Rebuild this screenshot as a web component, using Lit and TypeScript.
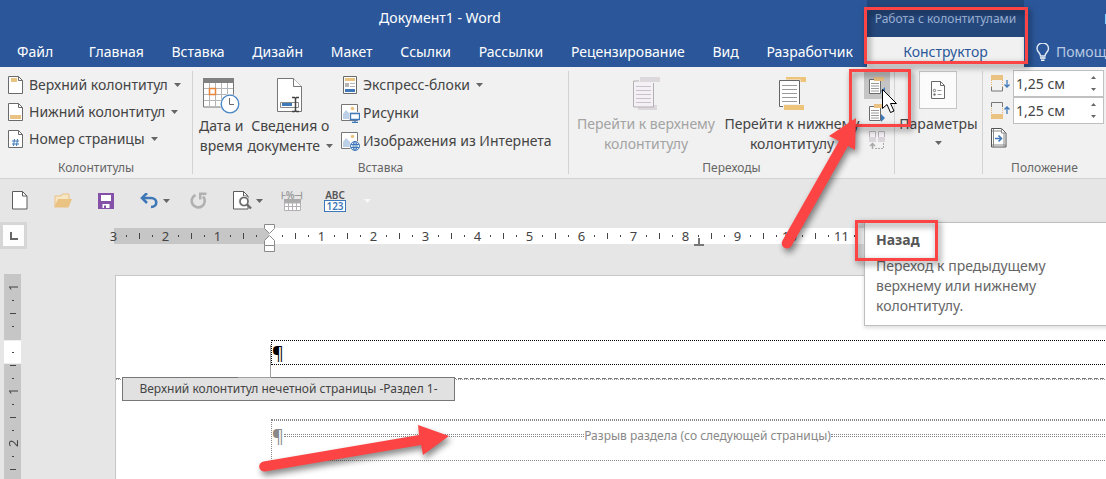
import { LitElement, html, svg, css } from "lit";
import { customElement } from "lit/decorators.js";
import { classMap } from "lit/directives/class-map.js";

const caret = html`<svg class="caret" viewBox="0 0 7 4" width="7" height="4"><path d="M0 0h7L3.500 4z" fill="currentColor"/></svg>`;

const icon = (w: number, h: number, body: unknown) =>
  html`<svg class="icon" width=${w} height=${h} viewBox="0 0 ${w} ${h}" aria-hidden="true">${body}</svg>`;

const icons = {
  header: icon(15, 18, svg`<path d="M.5 .5h10l4 4v13H.5z" fill="#fff" stroke="#6a6a6a"/><path d="M10.500 .5v4h4" fill="none" stroke="#6a6a6a"/><path d="M3 2h6v4H3z" fill="#eac282"/>`),
  footer: icon(15, 18, svg`<path d="M.5 .5h10l4 4v13H.5z" fill="#fff" stroke="#6a6a6a"/><path d="M10.500 .5v4h4" fill="none" stroke="#6a6a6a"/><path d="M2 12h11v4H2z" fill="#eac282"/>`),
  number: icon(15, 18, svg`<path d="M.5 .5h10l4 4v13H.5z" fill="#fff" stroke="#6a6a6a"/><path d="M10.500 .5v4h4" fill="none" stroke="#6a6a6a"/><path d="M6.500 9l-1 7M9.500 9l-1 7M4 11h7M4 14h7" stroke="#3f78b8" fill="none"/>`),
  date: icon(37, 36, svg`<path d="M.5 4h30v25H.5z" fill="#fff" stroke="#777"/><path d="M0 0h31v5H0z" fill="#808080"/><path d="M6.500 5v23M12.500 5v23M18.500 5v23M24.500 5v23M1 10.500h29M1 16.500h29M1 22.500h29" stroke="#b5b5b5"/><path d="M6.500 10.500h6v6h-6z" fill="#fff" stroke="#e8833a" stroke-width="1.500"/><circle cx="27" cy="26" r="10" fill="#f1f1f1"/><circle cx="27" cy="26" r="8.800" fill="#fff" stroke="#4a86c5" stroke-width="1.300"/><path d="M26.500 20v6.500H31" fill="none" stroke="#6a6a6a"/>`),
  info: icon(26, 36, svg`<path d="M.5 .5h16l8 8v25H.5z" fill="#fff" stroke="#777"/><path d="M16.500 .5v8h8" fill="#fff" stroke="#777"/><path d="M3.500 24.500h18v5h-18z" fill="#fff" stroke="#8b8b8b"/><path d="M5 25h10v3H5z" fill="#3f78b8"/><path d="M15 19.500h2.500l1 1 1-1H22M18.500 20v13M15 33.500h2.500l1-1 1 1H22" fill="none" stroke="#444" stroke-width="1.500"/>`),
  blocks: icon(19, 19, svg`<path d="M2.500 .5h13v17h-13z" fill="#fff" stroke="#6a6a6a"/><path d="M4 2h10v3H4z" fill="#eac282"/><path d="M4 7h4v4H4z" fill="#b5b5b5"/><path d="M9 7.500h5M9 10.500h5" stroke="#b5b5b5"/><path d="M4 13h10v3H4z" fill="#3f78b8"/>`),
  picture: icon(19, 19, svg`<path d="M.5 .5h16v16H.5z" fill="#fff" stroke="#777"/><circle cx="11.500" cy="4.500" r="1.800" fill="#eac282"/><path d="M2 15V10l3-4 4 4v5z" fill="#bcd0e8"/><path d="M8 8h11v8H8z" fill="#f1f1f1"/><path d="M9.500 9.500h9v6h-9z" fill="#fff" stroke="#3f78b8" stroke-width="1.300"/><path d="M14 15v3M11 18.300h6" stroke="#3f78b8" stroke-width="1.300"/>`),
  online: icon(19, 19, svg`<path d="M.5 .5h16v16H.5z" fill="#fff" stroke="#777"/><circle cx="11.500" cy="4.500" r="1.800" fill="#eac282"/><path d="M2 15V10l3-4 4 4v5z" fill="#bcd0e8"/><circle cx="14" cy="14" r="5.500" fill="#f1f1f1"/><g fill="none" stroke="#3f78b8"><circle cx="14" cy="14" r="4.500" fill="#fff"/><ellipse cx="14" cy="14" rx="2" ry="4.500"/><path d="M14 9.500v9M10 12.500h8M10 15.500h8"/></g>`),
  toHeader: icon(28, 34, svg`<path d="M6 28h19v5H6z" fill="#dcd8dc"/><path d="M1.500 4h20v26h-20z" fill="#f5f0f5" stroke="#b3afb3"/><path d="M7 0h21v6H7z" fill="#f1f1f1"/><path d="M8 0h20v5H8z" fill="#dcd8dc"/><path d="M4 9.500h15M4 13.500h15M4 17.500h15M4 21.500h15M4 25.500h15" stroke="#c8c3c8"/>`),
  toFooter: icon(28, 34, svg`<path d="M8 0h20v5H8z" fill="#eec47b"/><path d="M.5 2.500h22v29H.5z" fill="#f1f1f1"/><path d="M1.500 3.500h20v26h-20z" fill="#fff" stroke="#666"/><path d="M5 27h22v6H5z" fill="#f1f1f1"/><path d="M6 28h20v5H6z" fill="#eec47b"/><path d="M4 8.500h15M4 12.500h15M4 16.500h15M4 20.500h15M4 24.500h15" stroke="#9a9a9a"/>`),
  prev: icon(18, 18, svg`<path d="M1.500 2.500h11v14h-11z" fill="#fff" stroke="#6a6a6a"/><path d="M6 0h10v4H6z" fill="#eac282"/><path d="M3 6.500h8M3 9h8M3 11.500h8M3 14h8" stroke="#9a9a9a"/><path d="M17 10v8l-4-4z" fill="#3f78b8"/>`),
  next: icon(18, 18, svg`<path d="M1.500 2.500h11v14h-11z" fill="#fff" stroke="#6a6a6a"/><path d="M6 0h9v4H6z" fill="#eac282"/><path d="M3 6.500h8M3 9h8M3 11.500h8M3 14h8" stroke="#9a9a9a"/><path d="M13 10v8l4-4z" fill="#3f78b8"/>`),
  link: icon(18, 18, svg`<path d="M1.500 .5h6v6h-6zM10.500 .5h6v6h-6z" fill="#f5f0f5" stroke="#b9b5b9"/><path d="M1 6h7v5H1zM10 6h7v5h-7z" fill="#dad5da"/><path d="M4.500 18v-5M2 15l2.500-2.500L7 15" fill="none" stroke="#a9a9a9" stroke-width="1.500"/><path d="M7 17.500h8.500V12" fill="none" stroke="#a9a9a9" stroke-dasharray="2 1"/>`),
  options: icon(16, 19, svg`<path d="M1.500 .5h9l4 4v13h-13z" fill="#fff" stroke="#6a6a6a"/><path d="M10.500 .5v4h4" fill="none" stroke="#6a6a6a"/><circle cx="4.500" cy="9.500" r="1.200" fill="none" stroke="#777"/><circle cx="4.500" cy="13.500" r="1.200" fill="#777"/><path d="M7.500 9.500h4M7.500 13.500h4" stroke="#999"/>`),
  fromTop: icon(19, 17, svg`<path d="M0 0h12v5H0z" fill="#eac282"/><path d="M.5 5v8M11.500 5v8" stroke="#e5b878" stroke-dasharray="1 1"/><path d="M.5 12v4h11v-4" fill="none" stroke="#777"/><path d="M16 5v7M13.500 9.500L16 12l2.500-2.500" fill="none" stroke="#3f78b8" stroke-width="1.300"/>`),
  fromBottom: icon(19, 17, svg`<path d="M0 12h12v5H0z" fill="#eac282"/><path d="M.5 4v8M11.500 4v8" stroke="#e5b878" stroke-dasharray="1 1"/><path d="M.5 5V.5h11V5" fill="none" stroke="#777"/><path d="M16 12V5M13.500 7.500L16 5l2.500 2.500" fill="none" stroke="#3f78b8" stroke-width="1.300"/>`),
  align: icon(16, 20, svg`<path d="M.5 .5h10l4.500 4.500v14H.5z" fill="#fff" stroke="#555"/><path d="M10.500 .5V5H15M2.500 1v18M13 5v14M1 17h14M1 3h9" fill="none" stroke="#888"/><path d="M4 10.500h6M7.500 7.500l3 3-3 3" fill="none" stroke="#3f78b8" stroke-width="1.600"/>`),
  newDoc: icon(16, 19, svg`<path d="M.5 .5h10l4.500 4.500v13H.5z" fill="#fff" stroke="#5b5b5b"/><path d="M10.500 .5V5H15" fill="none" stroke="#5b5b5b"/>`),
  open: icon(18, 15, svg`<path d="M1 13V3h6l1.500-2H15v5" fill="#f7e6c4" stroke="#eac282"/><path d="M0 14.500L4 6h14l-3.500 8.500z" fill="#eac282"/>`),
  save: icon(16, 16, svg`<path d="M0 0h16v16H0z" fill="#8550a8"/><path d="M3 2h10v6H3z" fill="#fff"/><path d="M4.500 11h7v4h-7z" fill="#fff"/><path d="M6 12.500h2V15H6z" fill="#8550a8"/>`),
  undo: icon(18, 16, svg`<path d="M2 5h9c7 0 7 9 0 9" fill="none" stroke="#3f78b8" stroke-width="2.600"/><path d="M7 0L2 5l5 5" fill="none" stroke="#3f78b8" stroke-width="2.600"/>`),
  redo: icon(18, 17, svg`<path d="M5.500 3A6.500 6.500 0 1 0 13 4.500" fill="none" stroke="#b1b1b1" stroke-width="2.600"/><path d="M9 .5h7.500V3h-5v4.500H9z" fill="#b1b1b1"/>`),
  preview: icon(19, 19, svg`<path d="M.5 .5h10l4.500 4.500v13H.5z" fill="#fff" stroke="#5b5b5b"/><path d="M10.500 .5V5H15" fill="none" stroke="#5b5b5b"/><circle cx="11" cy="10.500" r="5.500" fill="#e6e6e6"/><circle cx="11" cy="10.500" r="4" fill="#fff" stroke="#6a6a6a" stroke-width="1.700"/><path d="M14 13.500l4 4" stroke="#6a6a6a" stroke-width="2.400"/>`),
  grid: icon(17, 12, svg`<path d="M0 0h17v4H0z" fill="#aaa"/><path d="M.5 4h16v7.500H.5zM4.500 4v8M8.500 4v8M12.500 4v8M0 7.500h17" fill="#fff" stroke="#b5b0b5"/>`),
  bulb: icon(14, 18, svg`<path d="M4.500 13c0-3-3.500-4-3.500-7.500a5.700 5.500 0 0 1 11.500 0C12.500 9 9 10 9 13z" fill="none" stroke="#e5ecf5" stroke-width="1.400"/><path d="M4 15h5.500M5 17.300h3.500" stroke="#fff" stroke-width="1.400"/>`),
};

const tabs = ["Главная", "Вставка", "Дизайн", "Макет", "Ссылки", "Рассылки", "Рецензирование", "Вид", "Разработчик"];

/* One entry per quarter of a centimetre; numbers fall on every fourth. */
const scale = (from: number, count: number) =>
  Array.from({ length: count }, (_, i) => {
    const q = from + i;
    if (q === 0) return "";
    if (q % 4 === 0) return String(Math.abs(q / 4));
    return q % 2 === 0 ? "|" : "·";
  });

@customElement("word-ruler")
class WordRuler extends LitElement {
  static properties = { vertical: { type: Boolean, reflect: true }, from: { type: Number }, count: { type: Number } };
  declare vertical: boolean;
  declare from: number;
  declare count: number;

  static styles = css`
    :host { display: flex; flex: none; font: 13px/16px "Noto Sans", "Open Sans", sans-serif; color: #444; }
    :host([vertical]) { flex-direction: column; }
    .mark { flex: none; width: 13px; height: 16px; display: flex; align-items: center; justify-content: center; white-space: nowrap; }
    .tick::before { content: ""; width: 1px; height: 6px; background: #444; }
    .dot::before { content: ""; width: 1px; height: 2px; background: #444; }
    :host([vertical]) .mark { width: 17px; height: 13px; }
    :host([vertical]) .num { writing-mode: vertical-rl; transform: rotate(180deg); }
    :host([vertical]) .tick::before { width: 6px; height: 1px; }
    :host([vertical]) .dot::before { width: 2px; height: 1px; }
  `;

  render() {
    return scale(this.from, this.count).map((m) => {
      const tick = m === "|", dot = m === "·" || m === "" && this.vertical;
      return html`<span class=${classMap({ mark: true, tick, dot: m === "·", num: !tick && !dot })}>${tick || dot ? "" : m}</span>`;
    });
  }
}

@customElement("app-root")
class AppRoot extends LitElement {
  static styles = css`
    :host { display: block; position: relative; overflow: hidden; min-height: 100vh; box-sizing: border-box; background: #e6e6e6; color: #444; font: 14px/20px "Noto Sans", "Open Sans", sans-serif; }
    * { box-sizing: border-box; }
    button { font: inherit; color: inherit; background: none; border: 0; padding: 0; margin: 0; white-space: nowrap; }
    .icon, .caret { display: block; flex: none; }
    .caret { color: #666; }

    .top { display: flex; background: #2b579a; color: #fff; overflow: hidden; }
    .main { flex: none; width: 867px; }
    .title { height: 37px; padding: 0 0 1px 13px; display: flex; align-items: center; justify-content: center; margin: 0; font-size: 14px; font-weight: 400; }
    .tabs { display: flex; justify-content: space-between; height: 30px; padding: 0 14px 0 17px; }
    .tabs .file { margin-right: 8px; }
    .context { flex: none; width: 157px; }
    .context-name { height: 37px; background: #24477c; color: #9db2d3; font-size: 12px; display: flex; align-items: center; justify-content: center; white-space: nowrap; }
    .context-tab { width: 100%; height: 30px; background: #f1f1f1; color: #2b579a; }
    .side { flex: 1 1 0; min-width: 0; display: flex; flex-direction: column; overflow: hidden; }
    .account { height: 37px; padding-left: 80px; text-align: left; }
    .tell { height: 30px; display: flex; align-items: center; gap: 6px; padding-left: 12px; color: #b9c9e2; }

    .ribbon { display: flex; height: 112px; background: #f1f1f1; border-bottom: 1px solid #d2d2d2; padding-top: 4px; overflow: hidden; }
    .group { flex: none; display: flex; flex-direction: column; height: 103px; border-right: 1px solid #d2d2d2; }
    .body { flex: 1; display: flex; }
    .label { height: 20px; line-height: 20px; margin: 0 0 -4px; text-align: center; font-size: 12px; font-weight: 400; color: #666; }
    .list { display: flex; flex-direction: column; }
    .row { display: flex; align-items: center; height: 27px; gap: 6px; }
    .big { display: flex; flex-direction: column; align-items: center; line-height: 20px; }
    .big .icon { margin: 0 0 2px; height: 36px; }
    .line { display: flex; align-items: center; gap: 6px; }
    .g1 { width: 193px; }
    .g1 .list { padding-left: 8px; }
    .g2 { width: 376px; }
    .g2 .body { padding: 7px 0 0 6px; gap: 4px; }
    .g2 .list { margin: -7px 0 0 4px; }
    .g2 .row { height: 28px; gap: 3px; }
    .g3 { width: 326px; }
    .g3 .body { padding: 5px 0 0 6px; gap: 4px; }
    .g3 .big { width: 142px; }
    .big:disabled { color: #a3a3a3; }
    .g3 .list { margin: -4px 0 0 -3px; }
    .mini { width: 26px; height: 27px; display: flex; align-items: center; justify-content: center; }
    .mini.on { background: #c5c5c5; }
    .g4 { width: 88px; }
    .g4 .body { justify-content: center; }
    .frame { width: 38px; height: 38px; background: #fbfbfb; border: 1px solid #c6c6c6; display: flex; align-items: center; justify-content: center; margin-bottom: 5px; }
    .g4 .big .icon { margin: 0; height: 19px; }
    .g4 .caret { margin-top: 7px; }
    .g5 { flex: 1 1 0; min-width: 0; border: 0; }
    .g5 .body { padding: 0 2px 0 8px; }
    .g5 .list { flex: 1; min-width: 0; margin-top: -1px; }
    .g5 .row { gap: 3px; }
    .spin { flex: 1; min-width: 0; display: flex; height: 27px; background: #fff; border: 1px solid #c0c0c0; }
    .spin input { flex: 1; width: 0; min-width: 0; border: 0; padding: 0 0 0 2px; background: none; font: inherit; color: #444; outline: 0; }
    .steps { flex: none; width: 20px; display: flex; flex-direction: column; justify-content: space-evenly; align-items: center; }
    .steps button { height: 9px; display: flex; align-items: center; }
    .steps .caret { width: 5px; height: 3px; }
    .up .caret { transform: rotate(180deg); }

    .quick { display: flex; align-items: center; gap: 15px; height: 43px; padding-left: 6px; }
    .tool { width: 28px; height: 28px; display: flex; flex-direction: column; align-items: center; justify-content: center; }
    .split { display: flex; align-items: center; }
    .more { width: 7px; height: 28px; display: flex; align-items: center; justify-content: center; }
    .pale .caret { color: #f8f8f8; }
    .abc { font-size: 10px; line-height: 10px; color: #555; font-weight: 600; }
    .box { border: 1px solid #3f78b8; background: #fff; color: #3f78b8; padding: 0 1px; font-size: 10px; line-height: 10px; font-weight: 600; }
    .pct { font-size: 10px; line-height: 8px; color: #999; font-weight: 600; }

    .rulers { display: flex; height: 52px; }
    .corner { width: 27px; height: 27px; border: 3px solid #d6d6d6; background: #fdfdfd; display: flex; align-items: center; justify-content: center; }
    .track { flex: 1; min-width: 0; height: 16px; margin: 6px 0 0 80px; overflow: hidden; background: linear-gradient(90deg, transparent 7px, #c6c6c6 7px 162px, #fff 162px); display: flex; }
    .indent { position: absolute; left: 264px; top: 224px; }
    .tabstop { position: absolute; left: 694px; top: 238px; }

    .work { display: flex; align-items: flex-start; height: 205px; }
    .side-ruler { flex: none; width: 17px; height: 205px; margin-left: 4px; padding-top: 7px; overflow: hidden; background: linear-gradient(#c6c6c6 66px, #eee 66px 67px, #fff 67px 89px, #eee 89px 90px, #c6c6c6 90px); }
    .page { flex: none; width: 1184px; height: 210px; margin: 1px 0 0 94px; background: #fff; border: 1px solid #c6c6c6; padding-top: 64px; }
    .head { margin: 0 0 0 155px; width: 860px; height: 25px; border: 1px dotted #000; color: #000; font-size: 18px; line-height: 24px; }
    .edge { height: 38px; margin-top: 12px; display: flex; align-items: flex-start; background: repeating-linear-gradient(90deg, #777 0 4px, transparent 4px 6px) 0 1px / 100% 1px no-repeat, repeating-linear-gradient(90deg, #999 0 1px, transparent 1px 2px) 0 2px / 100% 1px no-repeat; }
    .tag { margin-left: 6px; width: 333px; height: 24px; border: 1px solid #777; background: #e1e1e1; font-size: 12px; line-height: 22px; text-align: center; white-space: nowrap; }
    .text { margin-left: 155px; width: 860px; height: 42px; margin-top: 4px; border: 1px dotted #888; border-width: 1px 0 1px 1px; font-size: 12px; color: #888; }
    .break { display: flex; align-items: center; height: 30px; border-top: 1px dotted #888; }
    .break .mark { font-size: 18px; width: 12px; }
    .break .rule { flex: 1; height: 3px; border: 1px dotted #888; border-width: 1px 0; }
    .bracket { position: absolute; left: 238px; top: 345px; width: 33px; height: 33px; border: 1px solid #a0a0a0; border-width: 0 1px 1px 0; }

    .tip { position: absolute; left: 864px; top: 222px; width: 260px; height: 104px; background: #fff; border: 1px solid #bebebe; box-shadow: 0 2px 4px #0002; padding: 7px 50px 0 11px; color: #666; }
    .tip strong { display: block; margin-bottom: 6px; color: #555; }
    .tip p { margin: 0; }
    .mark-box { position: absolute; border: 3px solid #fd4444; filter: drop-shadow(2px 3px 3px #0008); }
    .m1 { left: 864px; top: 7px; width: 164px; height: 57px; }
    .m2 { left: 849px; top: 69px; width: 62px; height: 58px; }
    .m3 { left: 855px; top: 220px; width: 83px; height: 41px; }
    .arrows { position: absolute; left: 0; top: 0; filter: drop-shadow(2px 4px 3px #0007); pointer-events: none; }
    .pointer { position: absolute; left: 881px; top: 88px; }
  `;

  private spin(id: string, name: string, pic: unknown) {
    return html`<div class="row"><label for=${id} aria-label=${name}>${pic}</label>
      <div class="spin"><input id=${id} type="text" value="1,25 см"><span class="steps">
        <button class="up" aria-label="Больше">${caret}</button><button aria-label="Меньше">${caret}</button></span></div></div>`;
  }

  render() {
    return html`
      <header class="top">
        <div class="main">
          <h1 class="title">Документ1 - Word</h1>
          <nav class="tabs"><button class="file">Файл</button>${tabs.map((t) => html`<button>${t}</button>`)}</nav>
        </div>
        <div class="context"><div class="context-name">Работа с колонтитулами</div><button class="context-tab">Конструктор</button></div>
        <div class="side"><button class="account">Вход</button><button class="tell">${icons.bulb}Помощник</button></div>
      </header>

      <section class="ribbon">
        <div class="group g1">
          <div class="body list">
            <button class="row">${icons.header}<span class="line">Верхний колонтитул ${caret}</span></button>
            <button class="row">${icons.footer}<span class="line">Нижний колонтитул ${caret}</span></button>
            <button class="row">${icons.number}<span class="line">Номер страницы ${caret}</span></button>
          </div>
          <h2 class="label">Колонтитулы</h2>
        </div>
        <div class="group g2">
          <div class="body">
            <button class="big">${icons.date}<span>Дата и</span><span>время</span></button>
            <button class="big">${icons.info}<span>Сведения о</span><span class="line">документе ${caret}</span></button>
            <div class="list">
              <button class="row">${icons.blocks}<span class="line">Экспресс-блоки ${caret}</span></button>
              <button class="row">${icons.picture}Рисунки</button>
              <button class="row">${icons.online}Изображения из Интернета</button>
            </div>
          </div>
          <h2 class="label">Вставка</h2>
        </div>
        <div class="group g3">
          <div class="body">
            <button class="big" disabled>${icons.toHeader}<span>Перейти к верхнему</span><span>колонтитулу</span></button>
            <button class="big">${icons.toFooter}<span>Перейти к нижнему</span><span>колонтитулу</span></button>
            <div class="list">
              <button class="mini on" aria-label="Назад">${icons.prev}</button>
              <button class="mini" aria-label="Вперед">${icons.next}</button>
              <button class="mini" aria-label="Как в предыдущем разделе" disabled>${icons.link}</button>
            </div>
          </div>
          <h2 class="label">Переходы</h2>
        </div>
        <div class="group g4">
          <div class="body"><button class="big"><span class="frame">${icons.options}</span><span>Параметры</span>${caret}</button></div>
        </div>
        <div class="group g5">
          <div class="body"><div class="list">
            ${this.spin("from-top", "Верхний колонтитул от края", icons.fromTop)}
            ${this.spin("from-bottom", "Нижний колонтитул от края", icons.fromBottom)}
            <button class="row" aria-label="Вставить табуляцию с выравниванием">${icons.align}</button>
          </div></div>
          <h2 class="label">Положение</h2>
        </div>
      </section>

      <div class="quick">
        <button class="tool" aria-label="Создать">${icons.newDoc}</button>
        <button class="tool" aria-label="Открыть">${icons.open}</button>
        <button class="tool" aria-label="Сохранить">${icons.save}</button>
        <span class="split"><button class="tool" aria-label="Отменить">${icons.undo}</button><button class="more" aria-label="Список отмены">${caret}</button></span>
        <button class="tool" aria-label="Повторить">${icons.redo}</button>
        <span class="split"><button class="tool" aria-label="Просмотр">${icons.preview}</button><button class="more" aria-label="Варианты просмотра">${caret}</button></span>
        <button class="tool" aria-label="Ширина столбцов"><span class="pct">⊦%⊣</span>${icons.grid}</button>
        <button class="tool"><span class="abc">ABC</span><span class="box">123</span></button>
        <button class="more pale" aria-label="Настройка панели">${caret}</button>
      </div>

      <div class="rulers">
        <button class="corner" aria-label="Табуляция">${icon(8, 8, svg`<path d="M1 0v7h7" fill="none" stroke="#666" stroke-width="2"/>`)}</button>
        <div class="track"><word-ruler .from=${-12} .count=${90}></word-ruler></div>
      </div>
      <svg class="indent" width="11" height="28" viewBox="0 0 11 28"><g fill="#fff" stroke="#8a8a8a"><path d="M.5 .5h10v4l-5 5-5-5z"/><path d="M.5 21.500v-5l5-5 5 5v5z"/><path d="M.5 21.500h10v6H.5z"/></g></svg>
      <svg class="tabstop" width="10" height="8" viewBox="0 0 10 8"><path d="M5 0v7M0 7h10" stroke="#777" stroke-width="2"/></svg>

      <main class="work">
        <div class="side-ruler"><word-ruler vertical .from=${-4} .count=${16}></word-ruler></div>
        <article class="page">
          <div class="head">¶</div>
          <div class="edge"><span class="tag">Верхний колонтитул нечетной страницы -Раздел 1-</span></div>
          <div class="text"><div class="break"><span class="mark">¶</span><span class="rule"></span><span>Разрыв раздела (со следующей страницы)</span><span class="rule"></span></div></div>
        </article>
      </main>
      <span class="bracket"></span>

      <aside class="tip" role="tooltip"><strong>Назад</strong><p>Переход к предыдущему верхнему или нижнему колонтитулу.</p></aside>

      <span class="mark-box m1"></span><span class="mark-box m2"></span><span class="mark-box m3"></span>
      <svg class="arrows" width="1106" height="479" viewBox="0 0 1106 479"><g fill="#fd4444">
        <path d="M782.500 240.500L839 141l-10-5 27-18-1 32-7-4-56.500 100a5 5 0 0 1-9-5.500z"/>
        <path d="M263.500 461.500L419 435l-1-10 31 11-26 19-2-10-156 26.500a5 5 0 0 1-1.500-10z"/></g></svg>
      <svg class="pointer" width="18" height="27" viewBox="0 0 18 27"><path d="M1.500 1.500v19l4.500-4 3.500 8 3.500-1.500-3.500-7.500h6z" fill="#fff" stroke="#000"/></svg>
    `;
  }
}
